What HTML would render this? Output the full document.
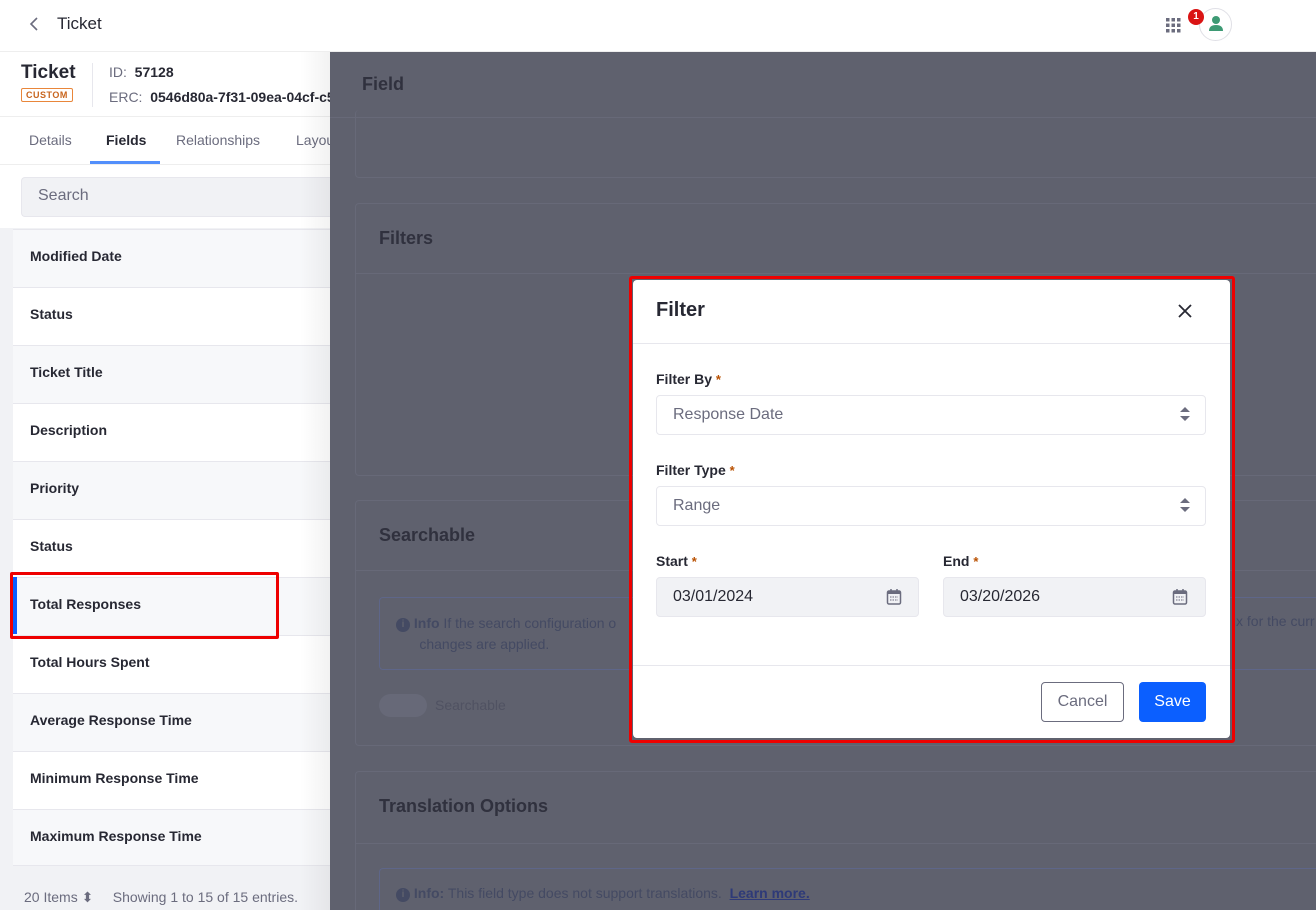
<!DOCTYPE html>
<html style="width:1316px;height:910px;overflow:hidden"><head><meta charset="utf-8"><style>
*{box-sizing:border-box;margin:0;padding:0}
body{width:1316px;height:910px;overflow:hidden;font-family:"Liberation Sans",sans-serif;background:#fff;position:relative;color:#272833}
.abs{position:absolute}
.ov{position:absolute;left:330px;top:52px;width:986px;height:858px;background:#5f616e;overflow:hidden}
.card{position:absolute;border:1px solid #676978;border-radius:4px}
.h{position:absolute;font-weight:bold;font-size:18px;color:#30313e}
.row{position:absolute;left:13px;width:317px;height:58px;border-top:1px solid #e7e7ed;font-weight:bold;font-size:14px;padding:18px 0 0 17px;color:#272833}
.row.g{background:#f7f8fa}
.lbl{position:absolute;font-weight:bold;font-size:14px;color:#272833}
.lbl b{color:#b95000;font-size:13px}
.inp{position:absolute;border:1px solid #e7e7ed;border-radius:4px;height:40px;font-size:16px;color:#6b6c7e;padding:10px 16px}
.ii{display:inline-block;width:14px;height:14px;border-radius:50%;background:#444a63;color:#5f616e;font-size:10px;font-weight:bold;text-align:center;line-height:14px;vertical-align:1px}
</style></head><body>
<div class="abs" style="left:0;top:0;width:1316px;height:52px;border-bottom:1px solid #eee"></div>
<svg class="abs" style="left:28px;top:17px" width="12" height="14"><path d="M9 1 L3 7 L9 13" stroke="#6b6c7e" stroke-width="1.6" fill="none"/></svg>
<div class="abs" style="left:57px;top:14px;font-size:17px;color:#272833">Ticket</div>
<svg class="abs" style="left:1166px;top:18px" width="15" height="15" fill="#6b6c7e"><rect x="0" y="0" width="3.5" height="3.5"/><rect x="5.5" y="0" width="3.5" height="3.5"/><rect x="11" y="0" width="3.5" height="3.5"/><rect x="0" y="5.5" width="3.5" height="3.5"/><rect x="5.5" y="5.5" width="3.5" height="3.5"/><rect x="11" y="5.5" width="3.5" height="3.5"/><rect x="0" y="11" width="3.5" height="3.5"/><rect x="5.5" y="11" width="3.5" height="3.5"/><rect x="11" y="11" width="3.5" height="3.5"/></svg>
<div class="abs" style="left:1199px;top:8px;width:33px;height:33px;border-radius:50%;border:1px solid #e0e0e6;background:#fff"></div>
<svg class="abs" style="left:1208px;top:15px" width="16" height="18" fill="#3d9a74"><circle cx="8" cy="5" r="4"/><path d="M1 16 Q1 10 8 10 Q15 10 15 16 Z"/></svg>
<div class="abs" style="left:1188px;top:9px;width:16px;height:16px;border-radius:50%;background:#da1414;color:#fff;font-size:10px;font-weight:bold;text-align:center;line-height:16px">1</div>

<div class="abs" style="left:0;top:52px;width:330px;height:858px;background:#fff"></div>
<div class="abs" style="left:21px;top:62px;font-size:19px;font-weight:bold">Ticket</div>
<div class="abs" style="left:21px;top:88px;border:1px solid #e9863a;color:#c8651e;font-size:9px;font-weight:bold;padding:1px 4px;border-radius:2px;letter-spacing:.5px">CUSTOM</div>
<div class="abs" style="left:92px;top:63px;width:1px;height:44px;background:#e7e7ed"></div>
<div class="abs" style="left:109px;top:64px;font-size:14px;color:#6b6c7e">ID:&nbsp; <span style="color:#272833;font-weight:bold">57128</span></div>
<div class="abs" style="left:109px;top:89px;font-size:14px;color:#6b6c7e;white-space:nowrap;width:221px;overflow:hidden">ERC:&nbsp; <span style="color:#272833;font-weight:bold">0546d80a-7f31-09ea-04cf-c5</span></div>
<div class="abs" style="left:0;top:116px;width:330px;height:1px;background:#eee"></div>
<div class="abs" style="left:29px;top:132px;font-size:14px;color:#6b6c7e">Details</div>
<div class="abs" style="left:106px;top:132px;font-size:14px;color:#272833;font-weight:bold">Fields</div>
<div class="abs" style="left:176px;top:132px;font-size:14px;color:#6b6c7e">Relationships</div>
<div class="abs" style="left:296px;top:132px;font-size:14px;color:#6b6c7e;width:34px;overflow:hidden;white-space:nowrap">Layouts</div>
<div class="abs" style="left:90px;top:161px;width:70px;height:3px;background:#528ffb"></div>
<div class="abs" style="left:0;top:164px;width:330px;height:1px;background:#eee"></div>
<div class="abs" style="left:21px;top:177px;width:309px;height:40px;background:#f1f2f5;border:1px solid #e7e7ed;border-right:none;border-radius:4px 0 0 4px;font-size:16px;color:#6b6c7e;padding:9px 16px">Search</div>
<div class="abs" style="left:0;top:228px;width:330px;height:682px;background:#f1f2f5"></div>
<div class="row g" style="top:229px">Modified Date</div>
<div class="row" style="top:287px;background:#fff">Status</div>
<div class="row g" style="top:345px">Ticket Title</div>
<div class="row" style="top:403px;background:#fff">Description</div>
<div class="row g" style="top:461px">Priority</div>
<div class="row" style="top:519px;background:#fff">Status</div>
<div class="row g" style="top:577px">Total Responses</div>
<div class="row" style="top:635px;background:#fff">Total Hours Spent</div>
<div class="row g" style="top:693px">Average Response Time</div>
<div class="row" style="top:751px;background:#fff">Minimum Response Time</div>
<div class="row g" style="top:809px;height:57px;border-bottom:1px solid #e7e7ed">Maximum Response Time</div>
<div class="abs" style="left:13px;top:577px;width:4px;height:57px;background:#0b5fff"></div>
<div class="abs" style="left:10px;top:572px;width:269px;height:67px;border:3px solid #ee0000;border-radius:2px"></div>
<div class="abs" style="left:24px;top:889px;font-size:14px;line-height:17px;color:#6b6c7e;white-space:nowrap">20 Items ⬍ &nbsp;&nbsp;&nbsp; Showing 1 to 15 of 15 entries.</div>
<div class="abs" style="left:300px;top:52px;width:30px;height:858px;background:linear-gradient(90deg,rgba(0,0,0,0),rgba(0,0,0,.05))"></div>

<div class="ov">
<div class="h" style="left:32px;top:22px">Field</div>
<div class="abs" style="left:0;top:65px;width:986px;height:1px;background:#676978"></div>
<div class="card" style="left:25px;top:58px;width:980px;height:68px;border-top:none"></div>
<div class="card" style="left:25px;top:151px;width:980px;height:273px"></div>
<div class="abs" style="left:25px;top:221px;width:961px;height:1px;background:#676978"></div>
<div class="h" style="left:49px;top:176px">Filters</div>
<div class="card" style="left:25px;top:448px;width:980px;height:246px"></div>
<div class="abs" style="left:25px;top:518px;width:961px;height:1px;background:#676978"></div>
<div class="h" style="left:49px;top:473px">Searchable</div>
<div class="card" style="left:49px;top:545px;width:980px;height:73px;border-color:#5e6689"></div>
<div class="abs" style="left:66px;top:561px;font-size:14px;color:#444a63;line-height:21px"><span class="ii">i</span>&nbsp;<b>Info</b> If the search configuration o<br>&nbsp;&nbsp;&nbsp;&nbsp;&nbsp;&nbsp;changes are applied.</div>
<div class="abs" style="left:906px;top:561px;font-size:14px;color:#444a63;white-space:nowrap">x for the curr</div>
<div class="abs" style="left:49px;top:642px;width:48px;height:23px;border-radius:12px;background:#676978"></div>
<div class="abs" style="left:105px;top:645px;font-size:14px;color:#505262">Searchable</div>
<div class="abs" style="left:25px;top:719px;width:961px;height:139px;border:1px solid #676978;border-bottom:none;border-right:none;border-radius:4px 0 0 0"></div>
<div class="abs" style="left:25px;top:791px;width:961px;height:1px;background:#676978"></div>
<div class="h" style="left:49px;top:744px">Translation Options</div>
<div class="abs" style="left:49px;top:816px;width:937px;height:42px;border:1px solid #5e6689;border-bottom:none;border-right:none;border-radius:4px 0 0 0"></div>
<div class="abs" style="left:66px;top:833px;font-size:14px;line-height:17px;color:#444a63;white-space:nowrap"><span class="ii">i</span>&nbsp;<b>Info:</b> This field type does not support translations. &nbsp;<u style="color:#2e3a78;font-weight:bold">Learn more.</u></div>
</div>

<div class="abs" style="left:629px;top:276px;width:606px;height:467px;border:3px solid #ee0000;border-radius:3px"></div>
<div class="abs" style="left:633px;top:280px;width:597px;height:458px;background:#fff;border-radius:4px"></div>
<div class="abs" style="left:656px;top:299px;font-size:20px;font-weight:bold;color:#272833">Filter</div>
<svg class="abs" style="left:1177px;top:303px" width="16" height="16"><path d="M2 2 L14 14 M14 2 L2 14" stroke="#272833" stroke-width="1.8"/></svg>
<div class="abs" style="left:633px;top:343px;width:597px;height:1px;background:#e7e7ed"></div>
<div class="lbl" style="left:656px;top:371px">Filter By <b>*</b></div>
<div class="inp" style="left:656px;top:395px;width:550px">Response Date</div>
<div class="lbl" style="left:656px;top:462px">Filter Type <b>*</b></div>
<div class="inp" style="left:656px;top:486px;width:550px">Range</div>
<svg class="abs" style="left:1179px;top:406px" width="12" height="16" fill="#6b6c7e"><path d="M6 1 L11 6 H1Z M6 15 L11 10 H1Z"/></svg>
<svg class="abs" style="left:1179px;top:497px" width="12" height="16" fill="#6b6c7e"><path d="M6 1 L11 6 H1Z M6 15 L11 10 H1Z"/></svg>
<div class="lbl" style="left:656px;top:553px">Start <b>*</b></div>
<div class="lbl" style="left:943px;top:553px">End <b>*</b></div>
<div class="inp" style="left:656px;top:577px;width:263px;background:#f1f2f5;color:#272833">03/01/2024</div>
<div class="inp" style="left:943px;top:577px;width:263px;background:#f1f2f5;color:#272833">03/20/2026</div>
<svg class="abs" style="left:886px;top:588px" width="17" height="18"><rect x="1.5" y="3" width="13" height="13" rx="1.5" fill="none" stroke="#6b6c7e" stroke-width="1.5"/><rect x="1.5" y="3" width="13" height="3" fill="#6b6c7e"/><path d="M5 1v4M11 1v4" stroke="#6b6c7e" stroke-width="1.5"/><path d="M4 9h8M4 12h8" stroke="#6b6c7e" stroke-dasharray="1.5 1"/></svg>
<svg class="abs" style="left:1172px;top:588px" width="17" height="18"><rect x="1.5" y="3" width="13" height="13" rx="1.5" fill="none" stroke="#6b6c7e" stroke-width="1.5"/><rect x="1.5" y="3" width="13" height="3" fill="#6b6c7e"/><path d="M5 1v4M11 1v4" stroke="#6b6c7e" stroke-width="1.5"/><path d="M4 9h8M4 12h8" stroke="#6b6c7e" stroke-dasharray="1.5 1"/></svg>
<div class="abs" style="left:633px;top:665px;width:597px;height:1px;background:#e7e7ed"></div>
<div class="abs" style="left:1041px;top:682px;width:83px;height:40px;border:1px solid #6b6c7e;border-radius:4px;font-size:16px;color:#6b6c7e;text-align:center;line-height:38px">Cancel</div>
<div class="abs" style="left:1139px;top:682px;width:67px;height:40px;background:#0b5fff;border-radius:4px;font-size:16px;color:#fff;text-align:center;line-height:40px">Save</div>
</body></html>
